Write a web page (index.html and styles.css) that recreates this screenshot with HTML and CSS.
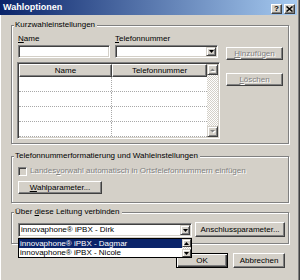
FILE: index.html
```html
<!DOCTYPE html>
<html lang="de">
<head>
    <meta charset="UTF-8">
    <title>Wahloptionen</title>
    <link rel="stylesheet" href="styles.css">
</head>
<body>
<div class="window">
    <div class="titlebar">
        <span class="title">Wahloptionen</span>
        <div class="title-buttons">
            <span class="tbtn">?</span>
            <span class="tbtn"><svg width="7" height="6" viewBox="0 0 7 6"><path d="M0.5 0.5 L6.5 5.5 M6.5 0.5 L0.5 5.5" stroke="#000" stroke-width="1.5"/></svg></span>
        </div>
    </div>

    <div class="content">
        <!-- Kurzwahl -->
        <div class="group group-speed">
            <div class="group-title">Kurzwahleinstellungen</div>
            <div class="speed-row">
                <div class="speed-left">
                    <div class="fields">
                        <div class="field-name">
                            <div class="label"><u>N</u>ame</div>
                            <div class="textbox"></div>
                        </div>
                        <div class="field-phone">
                            <div class="label"><u>T</u>elefonnummer</div>
                            <div class="combo">
                                <div class="combo-text"></div>
                                <span class="drop-btn"><svg width="5" height="3" viewBox="0 0 5 3"><polygon points="0,0 5,0 2.5,3" fill="#000"/></svg></span>
                            </div>
                        </div>
                    </div>
                    <div class="listview">
                        <div class="lv-main">
                            <div class="lv-header">
                                <span class="col col-name">Name</span>
                                <span class="col col-phone">Telefonnummer</span>
                            </div>
                            <div class="lv-row"><span class="cell-name"></span><span></span></div>
                            <div class="lv-row"><span class="cell-name"></span><span></span></div>
                            <div class="lv-row"><span class="cell-name"></span><span></span></div>
                            <div class="lv-row"><span class="cell-name"></span><span></span></div>
                        </div>
                        <div class="vscroll">
                            <span class="sbtn"><svg width="7" height="5" viewBox="0 0 7 5"><polygon points="1,4 6,4 3.5,1.5" fill="#fff" transform="translate(1,1)"/><polygon points="1,4 6,4 3.5,1.5" fill="#808080"/></svg></span>
                            <span class="track"></span>
                            <span class="sbtn"><svg width="7" height="5" viewBox="0 0 7 5"><polygon points="1,1 6,1 3.5,3.5" fill="#fff" transform="translate(1,1)"/><polygon points="1,1 6,1 3.5,3.5" fill="#808080"/></svg></span>
                        </div>
                    </div>
                </div>
                <div class="speed-buttons">
                    <button class="btn btn-disabled btn-add"><u>H</u>inzufügen</button>
                    <button class="btn btn-disabled btn-del"><u>L</u>öschen</button>
                </div>
            </div>
        </div>

        <!-- Formatierung -->
        <div class="group group-format">
            <div class="group-title">Telefonnummerformatierung und Wahleinstellungen</div>
            <div class="check-row">
                <span class="checkbox"></span>
                <span class="check-label">Landes<u>v</u>orwahl automatisch in Ortsfelefonnummern einfügen</span>
            </div>
            <button class="btn btn-dial"><u>W</u>ahlparameter...</button>
        </div>

        <!-- Leitung -->
        <div class="group group-line">
            <div class="group-title">Über <u>d</u>iese Leitung verbinden</div>
            <div class="line-row">
                <div class="combo-wrap">
                    <div class="combo combo-line">
                        <div class="combo-text">innovaphone® iPBX - Dirk</div>
                        <span class="drop-btn"><svg width="5" height="3" viewBox="0 0 5 3"><polygon points="0,0 5,0 2.5,3" fill="#000"/></svg></span>
                    </div>
                    <div class="dropdown">
                        <div class="dd-items">
                            <div class="dd-item selected">innovaphone® iPBX - Dagmar</div>
                            <div class="dd-item">innovaphone® iPBX - Nicole</div>
                        </div>
                        <div class="dd-scroll">
                            <span class="dd-sbtn"><svg width="5" height="3" viewBox="0 0 5 3"><polygon points="0,3 5,3 2.5,0" fill="#000"/></svg></span>
                            <span class="dd-track"></span>
                            <span class="dd-sbtn"><svg width="5" height="3" viewBox="0 0 5 3"><polygon points="0,0 5,0 2.5,3" fill="#000"/></svg></span>
                        </div>
                    </div>
                </div>
                <button class="btn btn-line">Anschlussparameter...</button>
            </div>
        </div>

        <div class="dialog-buttons">
            <button class="btn btn-default">OK</button>
            <button class="btn btn-cancel">Abbrechen</button>
        </div>
    </div>
</div>
</body>
</html>
```

FILE: styles.css
```css
body { margin: 0; font-family: "Liberation Sans", Arial, sans-serif; font-size: 8px; line-height: 10px; color: #000; background: #d4d0c8; }
.window { width: 300px; height: 280px; background: #d4d0c8; overflow: hidden; box-shadow: inset 1px 0 #fff, inset -1px 0 #404040, inset -2px 0 #808080; }

/* title bar */
.titlebar { width: 297px; height: 15px; display: flex; justify-content: space-between; background: linear-gradient(to right, #0a246a, #a6caf0); }
.title { color: #fff; font-weight: bold; font-size: 9px; line-height: 15px; padding-left: 3px; }
.title-buttons { display: flex; gap: 2px; margin: 4px 2px 0 0; }
.tbtn { width: 11px; height: 10px; box-sizing: border-box; display: flex; align-items: center; justify-content: center; background: #d4d0c8; border: 1px solid; border-color: #fff #404040 #404040 #fff; box-shadow: inset -1px -1px #808080; font-weight: bold; font-size: 8px; line-height: 8px; }

.content { padding: 10px 0 0 11px; }

/* group boxes */
.group { width: 278px; box-sizing: border-box; border: 1px solid #808080; box-shadow: 1px 1px #fff, inset 1px 1px #fff; padding-left: 6px; }
.group-title { width: fit-content; height: 10px; margin: -6px 0 0 -4px; padding: 0 2px 0 1px; background: #d4d0c8; white-space: nowrap; }

/* sunken fields */
.textbox, .combo, .listview, .checkbox { box-sizing: border-box; border: 1px solid; border-color: #808080 #fff #fff #808080; box-shadow: inset 1px 1px #404040, inset -1px -1px #d4d0c8; }
.textbox, .combo { margin-top: 1px; height: 13px; background: #fff; }
.combo { display: flex; padding: 1px; }
.combo-text { flex: 1; padding-left: 1px; white-space: nowrap; overflow: hidden; }
.drop-btn { width: 10px; box-sizing: border-box; display: flex; align-items: center; justify-content: center; background: #d4d0c8; border: 1px solid; border-color: #d4d0c8 #404040 #404040 #d4d0c8; box-shadow: inset 1px 1px #fff, inset -1px -1px #808080; }

/* buttons */
.btn { font: inherit; line-height: 10px; padding: 0; margin: 0; box-sizing: border-box; background: #d4d0c8; color: #000; border: 1px solid; border-color: #fff #404040 #404040 #fff; box-shadow: inset -1px -1px #808080; white-space: nowrap; }
.btn-disabled { color: #808080; text-shadow: 1px 1px #fff; }
.btn-default { border-color: #000; box-shadow: inset 1px 1px #fff, inset -1px -1px #404040, inset -2px -2px #808080; }

/* Kurzwahl */
.group-speed { padding-bottom: 4px; }
.speed-row { display: flex; }
.speed-left { width: 203px; margin-left: -1px; }
.fields { display: flex; margin-top: 4px; padding-left: 1px; }
.field-name { width: 92px; }
.field-phone { width: 103px; margin-left: 5px; }
.listview { margin-top: 4px; height: 77px; display: flex; padding: 1px; background: #fff; }
.lv-main { flex: 1; }
.lv-header { display: flex; height: 13px; }
.col { box-sizing: border-box; text-align: center; line-height: 11px; background: #d4d0c8; border: 1px solid; border-color: #fff #404040 #404040 #fff; box-shadow: inset -1px -1px #808080; }
.col-name { width: 93px; }
.col-phone { width: 95px; }
.lv-row { display: flex; height: 15px; box-sizing: border-box; border-bottom: 1px dotted #a8a8a8; }
.cell-name { width: 93px; box-sizing: border-box; border-right: 1px dotted #a8a8a8; }
.vscroll { width: 11px; display: flex; flex-direction: column; }
.sbtn { height: 11px; box-sizing: border-box; display: flex; align-items: center; justify-content: center; background: #d4d0c8; border: 1px solid; border-color: #d4d0c8 #404040 #404040 #d4d0c8; box-shadow: inset 1px 1px #fff, inset -1px -1px #808080; }
.track { flex: 1; background: repeating-conic-gradient(#fff 0 25%, #d4d0c8 0 50%) 0 0 / 2px 2px; }
.speed-buttons { display: flex; flex-direction: column; margin-left: 6px; width: 57px; }
.btn-add { margin-top: 17px; height: 13px; }
.btn-del { margin-top: 13px; height: 13px; }

/* Formatierung */
.group-format { margin-top: 12px; padding-bottom: 8px; }
.check-row { display: flex; align-items: center; height: 10px; margin-top: 5px; }
.checkbox { width: 9px; height: 9px; background: #d4d0c8; }
.check-label { margin-left: 3px; color: #808080; text-shadow: 1px 1px #fff; white-space: nowrap; }
.btn-dial { display: block; width: 84px; height: 13px; margin-top: 5px; }

/* Leitung */
.group-line { margin-top: 9px; padding-bottom: 6px; }
.line-row { display: flex; align-items: flex-end; margin-top: 5px; }
.combo-wrap { position: relative; width: 174px; }
.combo-line { height: 14px; margin-top: 0; }
.btn-line { width: 90px; height: 15px; margin-left: 3px; }
.dropdown { position: absolute; left: 0; top: 15px; width: 174px; height: 20px; box-sizing: border-box; border: 1px solid #000; background: #fff; display: flex; }
.dd-items { flex: 1; }
.dd-item { height: 9px; line-height: 9px; padding-left: 1px; white-space: nowrap; }
.dd-item.selected { background: #0a246a; color: #fff; }
.dd-scroll { width: 9px; display: flex; flex-direction: column; }
.dd-sbtn { height: 8px; box-sizing: border-box; display: flex; align-items: center; justify-content: center; background: #d4d0c8; border: 1px solid; border-color: #d4d0c8 #404040 #404040 #d4d0c8; box-shadow: inset 1px 1px #fff; }
.dd-track { flex: 1; background: repeating-conic-gradient(#fff 0 25%, #d4d0c8 0 50%) 0 0 / 2px 2px; }

.dialog-buttons { display: flex; justify-content: flex-end; gap: 5px; width: 274px; margin-top: 9px; }
.btn-default, .btn-cancel { width: 52px; height: 15px; }
```
